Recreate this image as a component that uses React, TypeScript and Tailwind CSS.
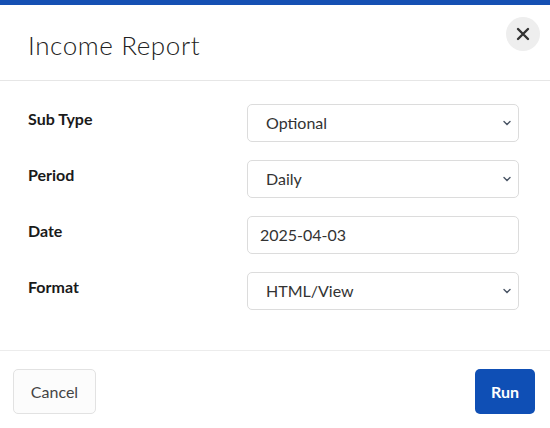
import React from "react";

const Chevron = () => (
  <svg width="10" height="10" viewBox="0 0 10 10" className="text-gray-600">
    <path d="M2 3.5 L5 6.5 L8 3.5" fill="none" stroke="currentColor" strokeWidth="1.4" strokeLinecap="round" />
  </svg>
);

const Row = ({ label, value, select = true }: { label: string; value: string; select?: boolean }) => (
  <div className="flex items-center h-[38px]">
    <div className="w-[219px] text-[16px] font-bold text-[#1a1a1a] -mt-2">{label}</div>
    <div className="w-[272px] h-[38px] border border-[#dcdcdc] rounded-[5px] flex items-center justify-between pl-[18px] pr-[6px] text-[16px] text-[#333]">
      <span className={select ? "" : "-ml-[6px]"}>{value}</span>
      {select && <Chevron />}
    </div>
  </div>
);

export default function App() {
  return (
    <div className="w-[550px] h-[428px] bg-white flex flex-col" style={{ fontFamily: "Lato, 'Open Sans', sans-serif" }}>
      <div className="h-[5px] bg-[#1550b3]" />
      <div className="h-[76px] border-b border-[#e6e6e6] flex items-start justify-between pl-[28px] pr-[10px]">
        <h1 className="text-[26px] font-light text-[#222] mt-[21px] tracking-[0.6px]">Income Report</h1>
        <button className="w-[34px] h-[34px] rounded-full bg-[#eeeeee] flex items-center justify-center mt-[12px]">
          <svg width="14" height="14" viewBox="0 0 14 14">
            <path d="M2 2 L12 12 M12 2 L2 12" stroke="#333" strokeWidth="2.4" strokeLinecap="round" />
          </svg>
        </button>
      </div>
      <div className="flex flex-col gap-[18px] pl-[28px] pt-[23px] h-[270px] border-b border-[#ececec]">
        <Row label="Sub Type" value="Optional" />
        <Row label="Period" value="Daily" />
        <Row label="Date" value="2025-04-03" select={false} />
        <Row label="Format" value="HTML/View" />
      </div>
      <div className="flex justify-between items-start px-[13px] pr-[15px] pt-[18px]">
        <button className="w-[83px] h-[45px] border border-[#e2e2e2] rounded-[5px] bg-[#fcfcfc] text-[16px] text-[#444]">Cancel</button>
        <button className="w-[60px] h-[45px] rounded-[5px] bg-[#0f4fb5] text-[16px] font-bold text-white">Run</button>
      </div>
    </div>
  );
}
